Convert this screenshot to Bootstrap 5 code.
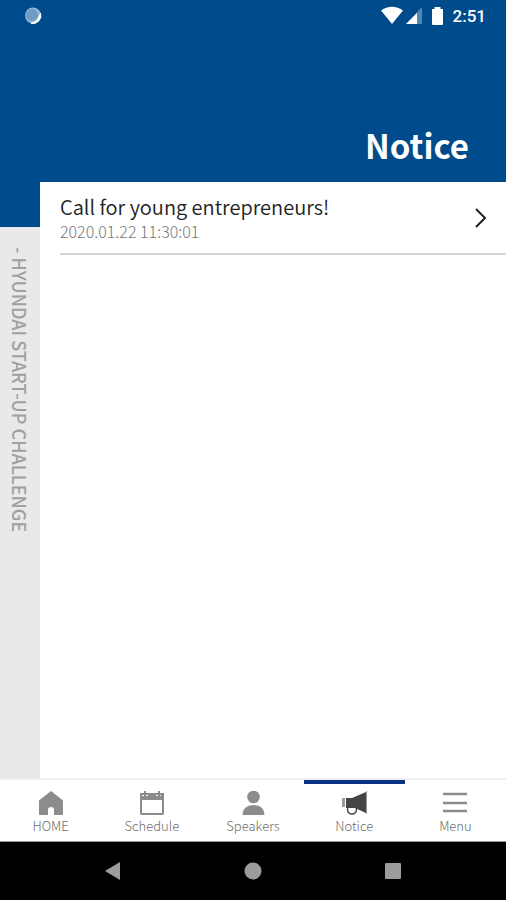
<!DOCTYPE html>
<html lang="en">
<head>
<meta charset="utf-8">
<meta name="viewport" content="width=device-width, initial-scale=1">
<title>Notice</title>
<link href="https://cdn.jsdelivr.net/npm/bootstrap@5.3.0/dist/css/bootstrap.min.css" rel="stylesheet">
<style>
  :root { --brand: #004b8b; --muted: #8c8c8c; }
  body { font-family: "Noto Sans CJK KR", "Noto Sans", sans-serif; background: #fff; }
  .brand-bg { background: var(--brand); }
  .status-bar { height: 32px; padding: 0 20px 0 24px; }
  .clock { font: 500 17px/24px Roboto, sans-serif; }
  .page-head { height: 150px; padding: 0 37px 12px; }
  .page-head h1 { font-size: 33px; line-height: 50px; font-weight: 700; }
  .side-rail { width: 40px; background: #e9e9e9; }
  .side-rail-top { height: 45px; }
  .side-label { writing-mode: vertical-rl; font-size: 18px; line-height: 40px; font-weight: 500; color: #a0a0a0; padding-top: 20px; }
  .notice-list { padding-left: 20px; }
  .notice-item { height: 73px; padding-right: 18px; border-bottom: 2px solid #d4d4d4; color: #222; }
  .notice-title { font-size: 20px; line-height: 26px; font-weight: 350; color: #222; }
  .notice-date { font-size: 16px; line-height: 22px; font-weight: 300; color: #777; }
  .tab-bar { height: 64px; border-top: 2px solid #f0f0f0; border-bottom: 1px solid #999; }
  .tab { color: var(--muted); font-size: 13px; line-height: 20px; font-weight: 300; border-top: 4px solid transparent; padding-top: 6px; }
  .tab span { color: #6c6c6c; }
  .tab.active { border-top-color: #0b3185; }
  .system-bar { height: 58px; background: #000; padding: 0 43px 6px; }
  .system-bar button { color: #9c9c9c; }
</style>
<script src="https://cdn.jsdelivr.net/npm/bootstrap@5.3.0/dist/js/bootstrap.bundle.min.js" defer></script>
</head>
<body class="d-flex flex-column min-vh-100">
  <header class="brand-bg text-white">
    <div class="status-bar d-flex align-items-center justify-content-between">
      <svg width="18" height="18" viewBox="0 0 18 18" aria-hidden="true">
        <circle cx="9" cy="8.500" r="8" fill="#94b5d5"/>
        <path d="M16.500 6A8 8 0 0 1 7 16.300Q14 15 16.500 6" fill="#fff" stroke="#fff"/>
        <circle cx="8" cy="8" r="6" fill="#6f9bc7"/>
      </svg>
      <div class="d-flex align-items-center">
        <svg width="64" height="20" viewBox="0 0 64 20" aria-hidden="true">
          <path d="M0 4.500Q11 -3 22 4.500L11 18Z" fill="#fff"/>
          <path d="M25 18L41 1V18Z" fill="#4f87b6"/>
          <path d="M25 18L36 7V18Z" fill="#fff"/>
          <path d="M51 3h2.500V1h6v2H62v15q0 1-1 1h-9q-1 0-1-1Z" fill="#fff"/>
        </svg>
        <span class="clock ms-2">2:51</span>
      </div>
    </div>
    <div class="page-head d-flex align-items-end justify-content-end">
      <h1 class="m-0">Notice</h1>
    </div>
  </header>

  <div class="d-flex flex-grow-1">
    <aside class="side-rail flex-shrink-0">
      <div class="side-rail-top brand-bg"></div>
      <div class="side-label text-nowrap">- HYUNDAI START-UP CHALLENGE</div>
    </aside>
    <main class="notice-list flex-grow-1">
      <a href="#notice" class="notice-item d-flex align-items-center justify-content-between text-decoration-none">
        <div>
          <div class="notice-title">Call for young entrepreneurs!</div>
          <div class="notice-date">2020.01.22 11:30:01</div>
        </div>
        <svg width="14" height="22" viewBox="0 0 14 22" fill="none" stroke="#222" stroke-width="2" aria-hidden="true"><path d="M2 2L11 11L2 20"/></svg>
      </a>
    </main>
  </div>

  <nav class="tab-bar bg-white d-flex text-center" aria-label="Main">
    <a href="#home" class="tab col text-decoration-none d-flex flex-column align-items-center">
      <svg width="26" height="26" viewBox="0 0 26 26" fill="currentColor" aria-hidden="true"><path d="M13 1L25 10.500V24q0 1-1 1H16V19.500q0-2.500-3-2.500t-3 2.500V25H2q-1 0-1-1V10.500Z"/></svg>
      <span>HOME</span>
    </a>
    <a href="#schedule" class="tab col text-decoration-none d-flex flex-column align-items-center">
      <svg width="26" height="26" viewBox="0 0 26 26" aria-hidden="true"><rect x="2" y="4" width="22" height="20" rx="1" fill="none" stroke="currentColor" stroke-width="2"/><path d="M1 3H3V6H5V1H7V6H9V3H17V6H19V1H21V6H22V3H25V10H1Z" fill="currentColor"/></svg>
      <span>Schedule</span>
    </a>
    <a href="#speakers" class="tab col text-decoration-none d-flex flex-column align-items-center">
      <svg width="26" height="26" viewBox="0 0 26 26" fill="currentColor" aria-hidden="true"><circle cx="13.500" cy="7" r="6.300"/><path d="M2.500 25Q3 15 13.500 15T24.500 25Z"/></svg>
      <span>Speakers</span>
    </a>
    <a href="#notice" class="tab active col text-decoration-none d-flex flex-column align-items-center" aria-current="page">
      <svg width="26" height="26" viewBox="0 0 26 26" aria-hidden="true"><path d="M1 8H4V17H1Z" fill="#999"/><circle cx="11" cy="19.500" r="4.500" fill="#fff" stroke="#444" stroke-width="1.500"/><path d="M5 8H11L25 2V23L14 18H5Z" fill="#444"/><path d="M25.500 1V24" stroke="#999"/></svg>
      <span>Notice</span>
    </a>
    <a href="#menu" class="tab col text-decoration-none d-flex flex-column align-items-center">
      <svg width="26" height="26" viewBox="0 0 26 26" stroke="currentColor" stroke-width="2.500" aria-hidden="true"><path d="M1 4H25M1 13H25M1 21H25"/></svg>
      <span>Menu</span>
    </a>
  </nav>

  <div class="system-bar d-flex align-items-center">
    <button class="btn border-0 p-0 col" aria-label="Back"><svg width="18" height="18" viewBox="0 0 18 18" fill="currentColor"><path d="M1 9L16 0V18Z"/></svg></button>
    <button class="btn border-0 p-0 col" aria-label="Home"><svg width="18" height="18" viewBox="0 0 18 18" fill="currentColor"><circle cx="9" cy="9" r="8.500"/></svg></button>
    <button class="btn border-0 p-0 col" aria-label="Recent apps"><svg width="18" height="18" viewBox="0 0 18 18" fill="currentColor"><rect x="1" y="1" width="16" height="16" rx="1"/></svg></button>
  </div>
</body>
</html>
